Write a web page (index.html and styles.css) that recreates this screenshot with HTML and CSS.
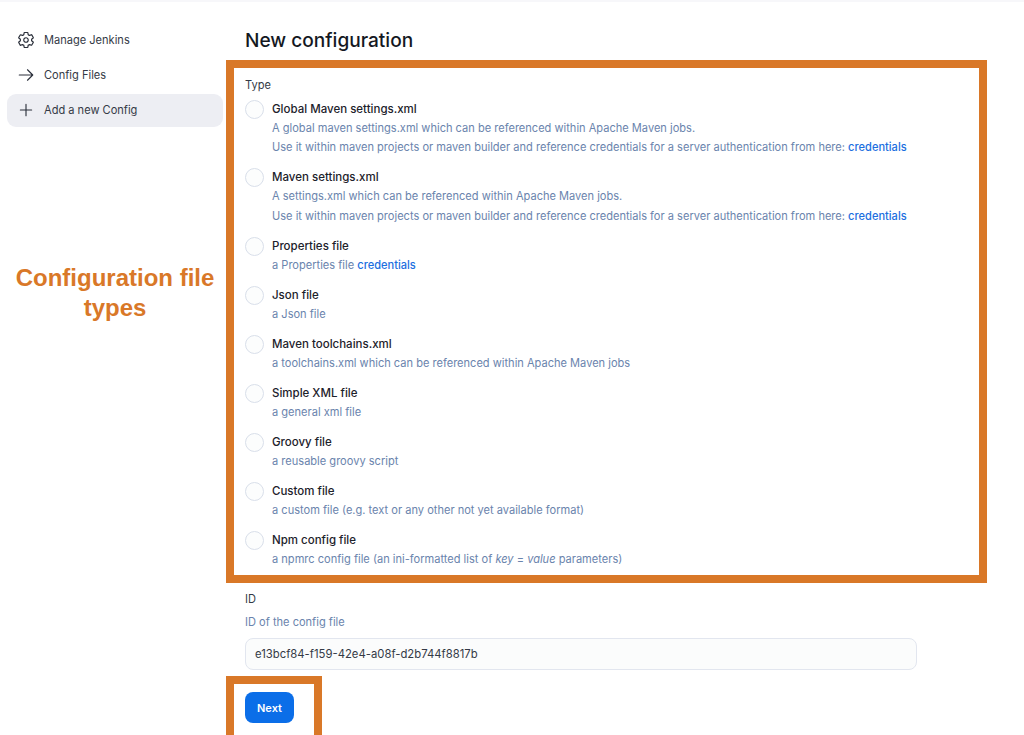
FILE: index.html
```html
<!DOCTYPE html>
<html lang="en">
<head>
    <meta charset="UTF-8">
    <meta name="viewport" content="width=device-width, initial-scale=1.0">
    <title>New configuration</title>
    <link rel="stylesheet" href="styles.css">
</head>
<body>
    <div class="top-strip"></div>
    <div class="page">
        <aside class="sidebar">
            <nav class="side-nav">
                <a class="side-item">
                    <svg class="side-icon" viewBox="0 0 512 512" fill="none" stroke="#2a2f3a" stroke-width="34" stroke-linecap="round" stroke-linejoin="round">
                        <path d="M262.29 192.31a64 64 0 1057.4 57.4 64.13 64.13 0 00-57.4-57.4zM416.39 256a154.34 154.34 0 01-1.53 20.79l45.21 35.46a10.81 10.81 0 012.45 13.75l-42.77 74a10.81 10.81 0 01-13.14 4.59l-44.9-18.08a16.11 16.11 0 00-15.17 1.75A164.48 164.48 0 01325 400.8a15.94 15.94 0 00-8.82 12.14l-6.73 47.89a11.08 11.08 0 01-10.68 9.17h-85.54a11.11 11.11 0 01-10.69-8.87l-6.72-47.82a16.07 16.07 0 00-9-12.22 155.3 155.3 0 01-21.46-12.57 16 16 0 00-15.11-1.71l-44.89 18.07a10.81 10.81 0 01-13.14-4.58l-42.77-74a10.8 10.8 0 012.45-13.75l38.21-30a16.05 16.05 0 006-14.08c-.36-4.17-.58-8.33-.58-12.5s.21-8.27.58-12.35a16 16 0 00-6.07-13.94l-38.19-30A10.81 10.81 0 0149.48 186l42.77-74a10.81 10.81 0 0113.14-4.59l44.9 18.08a16.11 16.11 0 0015.17-1.75A164.48 164.48 0 01187 111.2a15.94 15.94 0 008.82-12.14l6.73-47.89A11.08 11.08 0 01213.23 42h85.54a11.11 11.11 0 0110.69 8.87l6.72 47.82a16.07 16.07 0 009 12.22 155.3 155.3 0 0121.46 12.57 16 16 0 0015.11 1.71l44.89-18.07a10.81 10.81 0 0113.14 4.58l42.77 74a10.8 10.8 0 01-2.45 13.75l-38.21 30a16.05 16.05 0 00-6.05 14.08c.33 4.14.55 8.3.55 12.47z"/>
                    </svg>
                    Manage Jenkins
                </a>
                <a class="side-item">
                    <svg class="side-icon" viewBox="0 0 24 24" fill="none" stroke="#2a2f3a" stroke-width="1.5" stroke-linecap="round" stroke-linejoin="round">
                        <path d="M3 12h18M14 5l7 7-7 7"/>
                    </svg>
                    Config Files
                </a>
                <a class="side-item side-item-active">
                    <svg class="side-icon" viewBox="0 0 24 24" fill="none" stroke="#2a2f3a" stroke-width="1.5" stroke-linecap="round">
                        <path d="M12 4.500v15M4.500 12h15"/>
                    </svg>
                    Add a new Config
                </a>
            </nav>
            <div class="side-note">Configuration file types</div>
        </aside>

        <main class="content">
            <h1>New configuration</h1>
            <form>
                <div class="marked-box type-box">
                    <div class="field-label">Type</div>
                    <div class="option-list">
                        <div class="option">
                            <span class="radio"></span>
                            <div class="option-text">
                                <div class="option-title">Global Maven settings.xml</div>
                                <div class="option-desc">A global maven settings.xml which can be referenced within Apache Maven jobs.</div>
                                <div class="option-desc">Use it within maven projects or maven builder and reference credentials for a server authentication from here: <a class="link">credentials</a></div>
                            </div>
                        </div>
                        <div class="option">
                            <span class="radio"></span>
                            <div class="option-text">
                                <div class="option-title">Maven settings.xml</div>
                                <div class="option-desc">A settings.xml which can be referenced within Apache Maven jobs.</div>
                                <div class="option-desc">Use it within maven projects or maven builder and reference credentials for a server authentication from here: <a class="link">credentials</a></div>
                            </div>
                        </div>
                        <div class="option">
                            <span class="radio"></span>
                            <div class="option-text">
                                <div class="option-title">Properties file</div>
                                <div class="option-desc">a Properties file <a class="link">credentials</a></div>
                            </div>
                        </div>
                        <div class="option">
                            <span class="radio"></span>
                            <div class="option-text">
                                <div class="option-title">Json file</div>
                                <div class="option-desc">a Json file</div>
                            </div>
                        </div>
                        <div class="option">
                            <span class="radio"></span>
                            <div class="option-text">
                                <div class="option-title">Maven toolchains.xml</div>
                                <div class="option-desc">a toolchains.xml which can be referenced within Apache Maven jobs</div>
                            </div>
                        </div>
                        <div class="option">
                            <span class="radio"></span>
                            <div class="option-text">
                                <div class="option-title">Simple XML file</div>
                                <div class="option-desc">a general xml file</div>
                            </div>
                        </div>
                        <div class="option">
                            <span class="radio"></span>
                            <div class="option-text">
                                <div class="option-title">Groovy file</div>
                                <div class="option-desc">a reusable groovy script</div>
                            </div>
                        </div>
                        <div class="option">
                            <span class="radio"></span>
                            <div class="option-text">
                                <div class="option-title">Custom file</div>
                                <div class="option-desc">a custom file (e.g. text or any other not yet available format)</div>
                            </div>
                        </div>
                        <div class="option">
                            <span class="radio"></span>
                            <div class="option-text">
                                <div class="option-title">Npm config file</div>
                                <div class="option-desc">a npmrc config file (an ini-formatted list of <em>key</em> = <em>value</em> parameters)</div>
                            </div>
                        </div>
                    </div>
                </div>

                <div class="id-field">
                    <div class="field-label">ID</div>
                    <div class="option-desc id-desc">ID of the config file</div>
                    <input class="text-input" type="text" value="e13bcf84-f159-42e4-a08f-d2b744f8817b">
                </div>

                <div class="marked-box next-box">
                    <button type="button" class="next-button">Next</button>
                </div>
            </form>
        </main>
    </div>
</body>
</html>
```

FILE: styles.css
```css
html, body {
    height: 735px;
    overflow: hidden;
}
body {
    margin: 0;
    font-family: Inter, "Noto Sans", sans-serif;
    font-size: 11.07px;
    color: #14181f;
    background-color: #fff;
}
.top-strip {
    height: 2px;
    background-color: #f7f7fa;
}
.page {
    display: flex;
}
.sidebar {
    width: 216px;
    margin-left: 7px;
    flex-shrink: 0;
}
.side-nav {
    padding-top: 22px;
    display: flex;
    flex-direction: column;
    gap: 2px;
}
.side-item {
    display: flex;
    align-items: center;
    gap: 9px;
    height: 33px;
    padding: 0 0 1px 10px;
    box-sizing: border-box;
    border-radius: 9px;
    color: #343a46;
}
.side-item-active {
    background-color: #edeef3;
}
.side-icon {
    width: 18px;
    height: 18px;
}
.side-note {
    margin: 136px 0 0 -7px;
    width: 230px;
    text-align: center;
    font-family: "Liberation Sans", Arial, sans-serif;
    font-size: 24px;
    line-height: 30px;
    font-weight: bold;
    color: #d97828;
}
.content {
    margin-left: 3px;
    flex: 1;
}
h1 {
    margin: 26px 0 0 19px;
    font-size: 19.1px;
    line-height: 24px;
    font-weight: 500;
    color: #14181f;
}
.marked-box {
    border: 8px solid #d97828;
    background-color: #fff;
}
.type-box {
    width: 761px;
    height: 523px;
    margin-top: 8px;
    padding: 9px 0 0 11px;
    box-sizing: border-box;
}
.field-label {
    line-height: 16px;
    color: #343a46;
}
.option-list {
    display: flex;
    flex-direction: column;
    gap: 16px;
    margin-top: 9px;
}
.option {
    display: flex;
    gap: 8px;
}
.radio {
    width: 17px;
    height: 17px;
    margin-top: -2px;
    border: 1px solid #d9dfea;
    border-radius: 50%;
    background-color: #fcfdfd;
    flex-shrink: 0;
}
.option-title {
    font-size: 11.5px;
    line-height: 14px;
    font-weight: 500;
    color: #1d222b;
}
.option-desc {
    margin-top: 5px;
    line-height: 14px;
    color: #6a84ad;
}
.option-desc + .option-desc {
    margin-top: 5.3px;
}
.link {
    color: #1c6fe0;
    font-weight: 500;
}
.id-field {
    padding: 8px 0 0 19px;
}
.id-desc {
    margin-top: 8px;
}
.text-input {
    display: block;
    width: 672px;
    height: 32px;
    margin-top: 9px;
    padding: 0 9px;
    box-sizing: border-box;
    border: 1px solid #e2e6ef;
    border-radius: 8px;
    background-color: #fbfcfc;
    font-family: inherit;
    font-size: 11.3px;
    color: #343a46;
}
.next-box {
    width: 96px;
    height: 70px;
    margin-top: 6px;
    padding: 8px 0 0 11px;
    box-sizing: border-box;
}
.next-button {
    width: 49px;
    height: 31px;
    border: none;
    border-radius: 8px;
    background-color: #0b6ee8;
    color: #fff;
    font-family: inherit;
    font-size: 11px;
    font-weight: 600;
}
```
